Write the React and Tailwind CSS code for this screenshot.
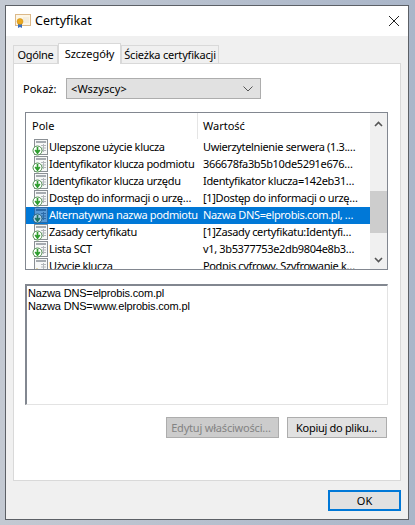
import React from 'react';

const rows = [
  ['Ulepszone użycie klucza', 'Uwierzytelnienie serwera (1.3.…', 'ext'],
  ['Identyfikator klucza podmiotu', '366678fa3b5b10de5291e676…', 'ext'],
  ['Identyfikator klucza urzędu', 'Identyfikator klucza=142eb31…', 'ext'],
  ['Dostęp do informacji o urzę…', '[1]Dostęp do informacji o urzę…', 'ext'],
  ['Alternatywna nazwa podmiotu', 'Nazwa DNS=elprobis.com.pl, …', 'ext', true],
  ['Zasady certyfikatu', '[1]Zasady certyfikatu:Identyfi…', 'ext'],
  ['Lista SCT', 'v1, 3b5377753e2db9804e8b3…', 'ext'],
  ['Użycie klucza', 'Podpis cyfrowy, Szyfrowanie k…', 'key'],
];

const FieldIcon = ({ kind, selected }) => (
  <svg width="17" height="17" viewBox="0 0 17 17" className="shrink-0">
    <rect x="2.5" y="0.5" width="13" height="15" fill={selected ? '#5a9bd6' : '#f7f8f8'} stroke={selected ? '#2c6ba8' : '#8a8f94'} />
    <path d="M4 3h10" stroke={selected ? '#2c6ba8' : '#a6abb0'} strokeWidth="2" />
    <path d="M9 6.5h5M9 9h5M9 11.5h5M11.5 5v8" stroke={selected ? '#2c6ba8' : '#b4b8bc'} />
    {kind === 'ext' ? (
      <>
        <circle cx="5.5" cy="11.5" r="4.5" fill={selected ? '#a8cde8' : '#fff'} stroke={selected ? '#25607e' : '#4e8f4e'} />
        <path d="M5.5 8v6M3.2 11 5.5 14 7.8 11" fill="none" stroke={selected ? '#1f7460' : '#2f9e2f'} strokeWidth="1.7" />
      </>
    ) : (
      <path d="M3 13a2 2 0 1 1 4 0a2 2 0 1 1 -4 0M6 12l5 2" fill="#e8c23a" stroke="#c09a18" />
    )}
  </svg>
);

const CertIcon = () => (
  <svg width="16" height="16" viewBox="0 0 16 16" className="shrink-0">
    <rect x="0.5" y="1.5" width="15" height="11" fill="#fdf6e6" stroke="#dcb98a" />
    <path d="M8 5h6M8 7h6M8 9h6" stroke="#ece4d4" />
    <path d="M3 10v5l2-1 2 1v-5z" fill="#3a6fc0" />
    <circle cx="5" cy="8.5" r="3" fill="#eba91d" stroke="#c8860f" strokeWidth="0.5" />
  </svg>
);

export default function App() {
  return (
    <div className="h-[525px] w-[415px] overflow-hidden bg-gradient-to-r from-[#c3c9d2] to-[#aab6c9] pt-[5px] pl-[5px] font-['Noto_Sans',sans-serif] text-[11px] leading-[16px] text-black">
      <div className="flex h-[515px] w-[404px] flex-col border border-[#5c6066] bg-[#f0f0f0]">
        <div className="flex h-[30px] items-center bg-white pl-[9px] pr-[8px]">
          <CertIcon />
          <span className="ml-[4px] text-[12.5px]">Certyfikat</span>
          <svg width="12" height="12" viewBox="0 0 12 12" className="ml-auto">
            <path d="M1 1l10 10M11 1L1 11" stroke="#222" strokeWidth="1" fill="none" />
          </svg>
        </div>

        <div className="flex-1 pl-[7px] pr-[7px] pt-[7px]">
          <div className="flex h-[20px] items-end whitespace-nowrap">
            <div className="flex h-[18px] w-[45px] items-center justify-center border border-b-0 border-[#d9d9d9] bg-[#f0f0f0] tracking-[-0.3px]">Ogólne</div>
            <div className="relative z-10 -mb-px flex h-[21px] w-[63px] items-start justify-center border border-b-0 border-[#d9d9d9] bg-white pt-[2px]">Szczegóły</div>
            <div className="flex h-[18px] w-[98px] items-center justify-center border border-b-0 border-[#d9d9d9] bg-[#f0f0f0] tracking-[-0.2px]">Ścieżka certyfikacji</div>
          </div>

          <div className="flex h-[418px] w-[388px] flex-col border border-[#d9d9d9] bg-white pl-[11px] pr-[12px] pt-[14px]">
            <div className="flex items-center">
              <span className="-ml-[2px] w-[43px]">Pokaż:</span>
              <div className="flex h-[21px] w-[195px] items-center border border-[#adadad] bg-[#e1e1e1] pl-[4px] pr-[7px] tracking-[0.1px]">
                &lt;Wszyscy&gt;
                <svg width="10" height="6" viewBox="0 0 10 6" className="ml-auto">
                  <path d="M0.5 0.5 5 5l4.5-4.5" fill="none" stroke="#555" />
                </svg>
              </div>
            </div>

            <div className="mt-[13px] flex h-[158px] w-[363px] border border-[#828790] bg-white">
              <div className="min-w-0 flex-1 overflow-hidden">
                <div className="flex h-[26px]">
                  <div className="flex w-[172px] shrink-0 items-center border-r border-[#e5e5e5] pl-[6px]">Pole</div>
                  <div className="flex items-center pl-[5px]">Wartość</div>
                </div>
                {rows.map(([name, value, kind, selected]) => (
                  <div key={name} className={`flex h-[17px] items-center whitespace-nowrap tracking-[-0.35px] ${selected ? 'bg-[#0078d7] text-white' : ''}`}>
                    <div className="flex w-[172px] shrink-0 items-center pl-[6px]">
                      <FieldIcon kind={kind} selected={selected} />
                      <span className="-mt-[1px]">{name}</span>
                    </div>
                    <span className="-mt-[1px] pl-[5px]">{value}</span>
                  </div>
                ))}
              </div>
              <div className="flex w-[17px] shrink-0 flex-col bg-[#f0f0f0]">
                <div className="flex h-[17px] items-center justify-center pt-[4px]">
                  <svg width="9" height="6" viewBox="0 0 9 6"><path d="M1 5l3.5-3.5L8 5" fill="none" stroke="#555" strokeWidth="1.6" /></svg>
                </div>
                <div className="mt-[61px] h-[42px] bg-[#cdcdcd]" />
                <div className="mt-auto flex h-[17px] items-center justify-center pb-[2px]">
                  <svg width="9" height="6" viewBox="0 0 9 6"><path d="M1 1l3.5 3.5L8 1" fill="none" stroke="#555" strokeWidth="1.6" /></svg>
                </div>
              </div>
            </div>

            <div className="mt-[14px] h-[121px] w-[363px] border-2 border-r border-b border-[#e3e3e3] border-l-[#828790] border-t-[#828790] pl-px pt-[1px] font-['Liberation_Sans',sans-serif] text-[11px] leading-[13px] tracking-[-0.17px]">
              <div>Nazwa DNS=elprobis.com.pl</div>
              <div>Nazwa DNS=www.elprobis.com.pl</div>
            </div>

            <div className="mt-[12px] flex justify-end gap-[8px] whitespace-nowrap pr-[1px]">
              <button className="h-[21px] w-[113px] border border-[#adadad] bg-[#cccccc] pr-[3px] tracking-[-0.2px] text-[#838383]">Edytuj właściwości…</button>
              <button className="h-[21px] w-[100px] border border-[#adadad] bg-[#e1e1e1] pr-[1px] tracking-[-0.3px]">Kopiuj do pliku…</button>
            </div>
          </div>

          <div className="mt-[9px] flex justify-end">
            <button className="h-[21px] w-[73px] border-2 border-[#0078d7] bg-[#e1e1e1]">OK</button>
          </div>
        </div>
      </div>
    </div>
  );
}
